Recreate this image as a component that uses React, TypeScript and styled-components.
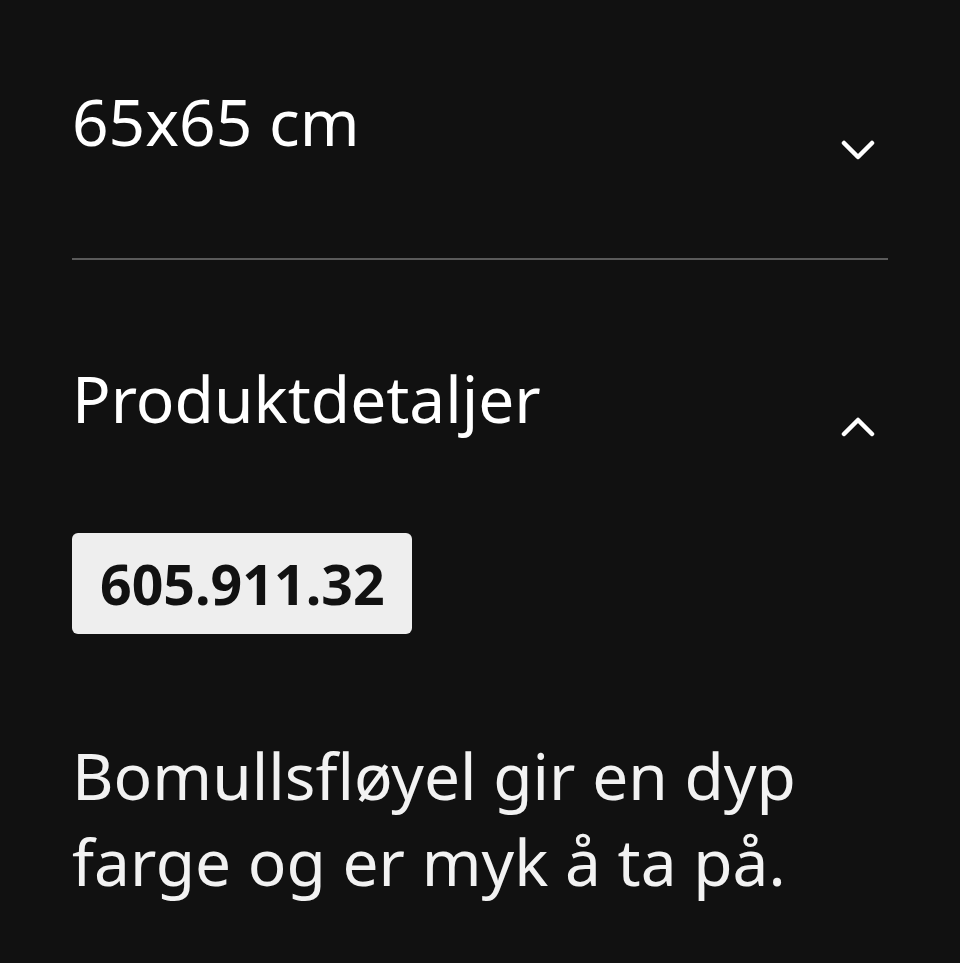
import styled, { createGlobalStyle } from 'styled-components'

const GlobalStyle = createGlobalStyle`
  html, body {
    margin: 0;
    padding: 0;
    background: #111111;
  }
  body {
    font-family: "Noto Sans", "Open Sans", sans-serif;
    color: #ffffff;
  }
`

const Page = styled.main`
  padding: 0 72px;
  min-height: 963px;
  box-sizing: border-box;
`

const Section = styled.section<{ $divider?: boolean }>`
  border-bottom: ${(p) => (p.$divider ? '2px solid #5a5a5a' : 'none')};
`

const Header = styled.div<{ $top: number; $bottom: number }>`
  display: flex;
  justify-content: space-between;
  align-items: flex-start;
  padding: ${(p) => p.$top}px 0 ${(p) => p.$bottom}px;
`

const Title = styled.h2`
  margin: 0;
  font-size: 64px;
  font-weight: 400;
  line-height: 88px;
  color: #ffffff;
`

const Chevron = styled.span<{ $offset: number }>`
  display: flex;
  width: 40px;
  height: 40px;
  margin-top: ${(p) => p.$offset}px;
  margin-right: 10px;
  align-items: center;
  justify-content: center;
`

const Body = styled.div`
  padding-bottom: 40px;
`

const ArticleNumber = styled.span`
  display: inline-block;
  padding: 12px 27px 12px 28px;
  background: #eeeeee;
  color: #111111;
  border-radius: 6px;
  font-size: 55.4px;
  font-weight: 700;
  line-height: 77px;
`

const Description = styled.p`
  margin: 99px 0 0;
  font-size: 64px;
  line-height: 86px;
  color: #f2f2f2;
`

const ChevronIcon = ({ up }: { up?: boolean }) => (
  <svg width="34" height="20" viewBox="0 0 34 20" fill="none">
    <polyline
      points={up ? '3,17 17,3 31,17' : '3,3 17,17 31,3'}
      stroke="#ffffff"
      strokeWidth="4.5"
      strokeLinecap="round"
      strokeLinejoin="round"
    />
  </svg>
)

export default function App() {
  return (
    <>
      <GlobalStyle />
      <Page>
        <Section $divider>
          <Header $top={78} $bottom={88}>
            <Title>65x65 cm</Title>
            <Chevron $offset={52}>
              <ChevronIcon />
            </Chevron>
          </Header>
        </Section>
        <Section>
          <Header $top={95} $bottom={86}>
            <Title>Produktdetaljer</Title>
            <Chevron $offset={52}>
              <ChevronIcon up />
            </Chevron>
          </Header>
          <Body>
            <ArticleNumber>605.911.32</ArticleNumber>
            <Description>Bomullsfløyel gir en dyp farge og er myk å ta på.</Description>
          </Body>
        </Section>
      </Page>
    </>
  )
}
